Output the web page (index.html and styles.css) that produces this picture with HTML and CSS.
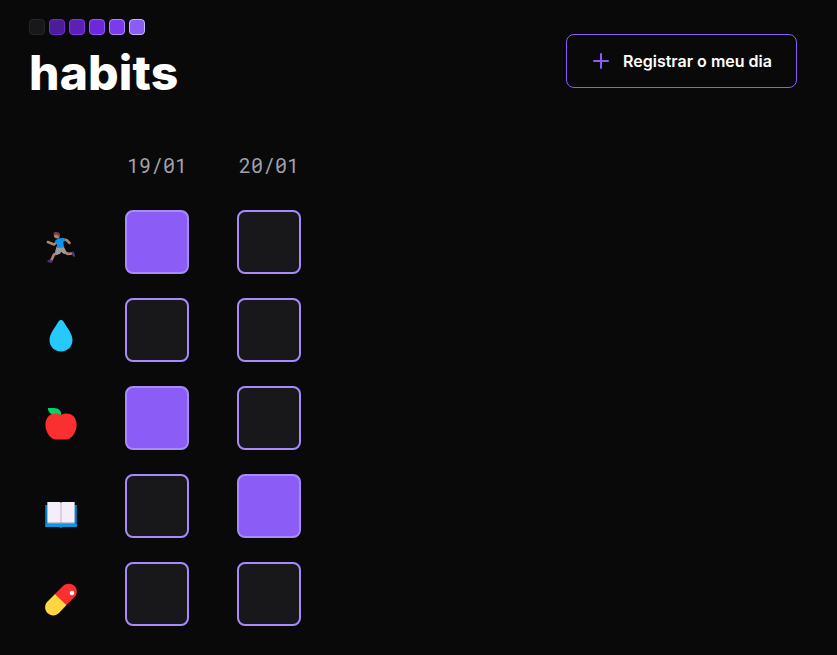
FILE: index.html
```html
<!DOCTYPE html>
<html lang="pt-BR">
<head>
<meta charset="utf-8">
<title>habits</title>
<link rel="stylesheet" href="styles.css">
</head>
<body>
<header class="header">
  <div class="brand">
    <div class="levels">
      <i class="level l0"></i><i class="level l1"></i><i class="level l2"></i><i class="level l3"></i><i class="level l4"></i><i class="level l5"></i>
    </div>
    <h1 class="title">habits</h1>
  </div>
  <button class="register" type="button">
    <svg class="plus" viewBox="0 0 16 16"><path d="M8 1v14M1 8h14"/></svg>
    <span>Registrar o meu dia</span>
  </button>
</header>
<main class="board">
  <div class="habits">
    <div class="habit"><svg class="emoji" viewBox="0 0 46 46">
      <path d="M18.500 17.500 16 19.500 9.800 17" fill="none" stroke="#b18170" stroke-width="2.500" stroke-linecap="round" stroke-linejoin="round"/>
      <path d="M24.500 14.500 28.500 15 31.500 18" fill="none" stroke="#b18170" stroke-width="2.500" stroke-linecap="round" stroke-linejoin="round"/>
      <path d="M21 27.500 16 29.500 13.500 35M26 27 29.500 28.800 34.500 28.500" fill="none" stroke="#b18170" stroke-width="2.700" stroke-linecap="round" stroke-linejoin="round"/>
      <path d="m12 34.500 3 1-1.500 2.500-4-1v-1.500ZM34 27.500l1.500-1.500 1.800 5.500-1.500.3-2-2Z" fill="#513578"/>
      <path d="m18.500 21.500 7-.5 3 6-2.500 2-3-2.300-1 2-4.200 1.300-.8-3Z" fill="#9b9b9b"/>
      <path d="m17.200 15.500 3.500-2.300 5-.2 2 2-2.500 2 .8 5.500-7 .5v-3.500l-1.600-2Z" fill="#0695ef"/>
      <path d="M15.700 9.500c0 3 1.800 4.500 4.300 4 1.800-.5 2-2.500 1-4.500Z" fill="#b18170"/>
      <path d="M15 8.500c1-2.300 7-2.300 7 1l-.5 3-2-2.500Z" fill="#78403a"/>
    </svg></div>
    <div class="habit"><svg class="emoji" viewBox="0 0 46 46"><path d="M20.500 8.400c1.200-2 3.800-2 5 0C28 13 34.500 20.500 34.500 27c0 6.500-5 11.500-11.500 11.500s-11.500-5-11.500-11.500C11.500 20.500 18 13 20.500 8.400Z" fill="#26c9fc"/></svg></div>
    <div class="habit"><svg class="emoji apple" viewBox="0 0 46 46"><path d="M9.800 8H16c5 0 7.300 3 7.300 7H17c-4 0-7-3-7.200-7Z" fill="#00d26a"/><path d="M23 15c3-2.300 9-2 12 .7 3 2.800 4 7 3.500 11C37.700 33.500 33 39.500 28 39.500H18C13 39.500 8.300 33.500 7.500 26.700 7 22.700 8 18.500 11 15.700c3-2.700 9-3 12-.7Z" fill="#f92f30"/></svg></div>
    <div class="habit"><svg class="emoji book" viewBox="0 0 46 46">
      <path d="M7.200 13h31.600v22H25l-2 1.200-2-1.200H7.200Z" fill="#0084ce"/><path d="M7.500 32.500h31V34.500h-31Z" fill="#00a6ed"/>
      <path d="M9.500 10H21l2 1 2-1h11.500v22H9.500Z" fill="#998ea4"/>
      <path d="M9.500 10H21c1 0 2 .5 2 1.300 0-.8 1-1.300 2-1.300h11.500v20.500H9.500Z" fill="#f3eef8"/>
      <path d="M23 11v20" stroke="#aaa2b2" stroke-width=".7"/>
    </svg></div>
    <div class="habit"><svg class="emoji" viewBox="0 0 46 46">
      <path d="m17 17 8-8c3.500-3.500 9-2.500 11.500 0 3 3 3 8 0 11l-8 8Z" fill="#f92f30"/>
      <path d="m17 17-7.500 7.500c-3.200 3.200-3.200 8.300 0 11.500s8.300 3.200 11.500 0l7.500-8Z" fill="#ffd642"/>
      <circle cx="34" cy="16" r="2.300" fill="#fff"/>
    </svg></div>
  </div>
  <section class="day">
    <time class="date">19/01</time>
    <i class="cell done"></i><i class="cell"></i><i class="cell done"></i><i class="cell"></i><i class="cell"></i>
  </section>
  <section class="day">
    <time class="date">20/01</time>
    <i class="cell"></i><i class="cell"></i><i class="cell"></i><i class="cell done"></i><i class="cell"></i>
  </section>
</main>
</body>
</html>
```
FILE: styles.css
```css
* { box-sizing: border-box; }
body {
  margin: 0;
  height: 655px;
  overflow: hidden;
  background: #09090a;
  color: #fff;
  font-family: Inter, sans-serif;
}
.header {
  display: flex;
  justify-content: space-between;
  padding: 19px 40px 0 29px;
  height: 146px;
}
.levels { display: flex; gap: 4px; }
.level {
  width: 16px;
  height: 16px;
  border: 1px solid;
  border-radius: 4px;
}
.l0 { background: #18181b; border-color: #27272a; }
.l1 { background: #4c1d95; border-color: #6d28d9; }
.l2 { background: #5b21b6; border-color: #7c3aed; }
.l3 { background: #6d28d9; border-color: #8b5cf6; }
.l4 { background: #7c3aed; border-color: #a78bfa; }
.l5 { background: #8b5cf6; border-color: #c4b5fd; }
.title {
  margin: 8px 0 0;
  font-size: 48px;
  line-height: 60px;
  font-weight: 800;
  letter-spacing: .15px;
}
.register {
  display: flex;
  align-items: center;
  gap: 14px;
  width: 231px;
  height: 54px;
  margin-top: 15px;
  padding: 0 0 0 26px;
  border: 1px solid #8b5cf6;
  border-radius: 8px;
  background: transparent;
  color: #fff;
  font: 600 16px/24px Inter, sans-serif;
  white-space: nowrap;
}
.plus {
  width: 16px;
  height: 16px;
  fill: none;
  stroke: #8b5cf6;
  stroke-width: 2;
  stroke-linecap: round;
}
.board { display: flex; padding-left: 29px; }
.habits {
  width: 72px;
  padding-top: 64px;
  display: grid;
  grid-auto-rows: 64px;
  gap: 24px;
}
.habit {
  width: 64px;
  display: flex;
  justify-content: center;
  padding-top: 15px;
}
.emoji { width: 46px; height: 46px; }
.apple { margin-top: -1px; }
.book { margin-top: 3px; }
.day {
  width: 112px;
  display: flex;
  flex-direction: column;
  align-items: center;
  gap: 24px;
}
.date {
  height: 40px;
  line-height: 38px;
  font-size: 20px;
  font-family: "Roboto Mono", monospace;
  color: #a1a1aa;
}
.cell {
  width: 64px;
  height: 64px;
  border: 2px solid #a78bfa;
  border-radius: 8px;
  background: #18181b;
}
.done { background: #8b5cf6; }
```
